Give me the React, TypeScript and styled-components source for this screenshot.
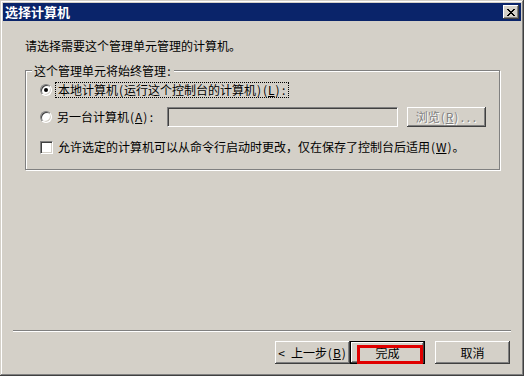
import React from "react";
import styled, { createGlobalStyle } from "styled-components";

const GlobalStyle = createGlobalStyle`
  html, body { margin: 0; padding: 0; background: #D4D0C8; }
  body { font-family: "Noto Sans CJK SC", "Noto Sans", sans-serif; font-size: 12px; color: #000; }
`;

const Window = styled.div`
  width: 524px;
  height: 376px;
  box-sizing: border-box;
  background: #d4d0c8;
  padding: 3px;
  display: flex;
  flex-direction: column;
  box-shadow: inset -1px -1px #404040, inset 1px 1px #d4d0c8,
    inset -2px -2px #808080, inset 2px 2px #ffffff;
`;

const TitleBar = styled.div`
  height: 18px;
  background: #0a246a;
  display: flex;
  align-items: center;
  justify-content: space-between;
  padding: 0 2px 0 2px;
`;

const Title = styled.span`
  color: #fff;
  font-weight: bold;
  font-size: 13px;
  line-height: 18px;
`;

const CloseButton = styled.div`
  width: 16px;
  height: 14px;
  background: #d4d0c8;
  display: flex;
  align-items: center;
  justify-content: center;
  box-shadow: inset -1px -1px #404040, inset 1px 1px #ffffff,
    inset -2px -2px #808080, inset 2px 2px #d4d0c8;
`;

const Body = styled.div`
  flex: 1;
  display: flex;
  flex-direction: column;
  padding: 17px 10px 9px 10px;
`;

const Main = styled.div`
  padding: 0 11px 0 12px;
  display: flex;
  flex-direction: column;
`;

const Intro = styled.div`
  line-height: 16px;
  height: 16px;
`;

const Group = styled.div`
  position: relative;
  margin-top: 16px;
  border: 1px solid #808080;
  box-shadow: inset 1px 1px #ffffff, 1px 1px #ffffff;
  padding: 11px 10px 14px 14px;
  display: flex;
  flex-direction: column;
`;

const Legend = styled.span`
  position: absolute;
  top: -8px;
  left: 6px;
  padding: 0 2px;
  background: #d4d0c8;
  line-height: 16px;
`;

const Row = styled.div<{ $gap?: number; $h?: number }>`
  display: flex;
  align-items: center;
  height: ${(p) => p.$h ?? 16}px;
  margin-top: ${(p) => p.$gap ?? 0}px;
`;

const Radio = styled.span<{ $checked?: boolean }>`
  position: relative;
  width: 12px;
  height: 12px;
  box-sizing: border-box;
  border-radius: 50%;
  background: #fff;
  border: 1px solid;
  border-color: #808080 #ffffff #ffffff #808080;
  box-shadow: inset 1px 1px #404040, inset -1px -1px #d4d0c8;
  margin-right: 3px;
  flex: none;
  &::after {
    content: "";
    display: ${(p) => (p.$checked ? "block" : "none")};
    position: absolute;
    left: 3px;
    top: 3px;
    width: 4px;
    height: 4px;
    border-radius: 50%;
    background: #000;
  }
`;

const Check = styled.span`
  width: 13px;
  height: 13px;
  box-sizing: border-box;
  background: #fff;
  border: 1px solid;
  border-color: #808080 #ffffff #ffffff #808080;
  box-shadow: inset 1px 1px #404040, inset -1px -1px #d4d0c8;
  margin-right: 5px;
  flex: none;
`;

const Label = styled.span<{ $w?: number }>`
  line-height: 16px;
  white-space: nowrap;
  ${(p) => (p.$w ? `width: ${p.$w}px; padding-left: 2px; box-sizing: border-box;` : "")}
`;

const FocusLabel = styled.span`
  line-height: 14px;
  border: 1px dotted #000;
  padding: 0 1px 0 2px;
  white-space: nowrap;
`;

const Caption = styled.span`
  white-space: pre;
`;

/* one half-width cell, as the bitmap font draws ASCII */
const Cell = styled.span<{ $u?: boolean }>`
  display: inline-block;
  min-width: 6px;
  text-align: center;
  text-decoration: ${(p) => (p.$u ? "underline" : "none")};
`;

/* "&X" marks the mnemonic letter */
function Txt({ s }: { s: string }) {
  const out: React.ReactNode[] = [];
  let run = "";
  let k = 0;
  const flush = () => {
    if (run) {
      out.push(run);
      run = "";
    }
  };
  for (let i = 0; i < s.length; i++) {
    const ch = s[i];
    if (ch === "&" && i + 1 < s.length) {
      flush();
      out.push(
        <Cell key={k++} $u>
          {s[i + 1]}
        </Cell>
      );
      i++;
    } else if (ch.charCodeAt(0) < 128) {
      flush();
      out.push(<Cell key={k++}>{ch === " " ? "\u00a0" : ch}</Cell>);
    } else {
      run += ch;
    }
  }
  flush();
  return <>{out}</>;
}

const TextField = styled.div`
  width: 231px;
  height: 20px;
  box-sizing: border-box;
  background: #d4d0c8;
  border: 1px solid;
  border-color: #808080 #ffffff #ffffff #808080;
  box-shadow: inset 1px 1px #404040, inset -1px -1px #d4d0c8;
  margin-right: 9px;
`;

const PushButton = styled.div<{ $w?: number; $h?: number; $disabled?: boolean; $default?: boolean }>`
  position: relative;
  width: ${(p) => p.$w ?? 75}px;
  height: ${(p) => p.$h ?? 23}px;
  box-sizing: border-box;
  display: flex;
  align-items: center;
  justify-content: center;
  background: #d4d0c8;
  line-height: 16px;
  white-space: pre;
  color: ${(p) => (p.$disabled ? "#808080" : "#000")};
  text-shadow: ${(p) => (p.$disabled ? "1px 1px #ffffff" : "none")};
  border: ${(p) => (p.$default ? "1px solid #000" : "none")};
  box-shadow: inset -1px -1px #404040, inset 1px 1px #ffffff,
    inset -2px -2px #808080, inset 2px 2px #d4d0c8;
`;

const RedMark = styled.span`
  position: absolute;
  left: 6px;
  top: 3px;
  width: 66px;
  height: 19px;
  box-sizing: border-box;
  border: 3px solid #e00000;
`;

const Spacer = styled.div`
  flex: 1;
`;

const Separator = styled.div`
  height: 1px;
  background: #808080;
  border-bottom: 1px solid #ffffff;
  margin-bottom: 9px;
`;

const ButtonRow = styled.div`
  display: flex;
  justify-content: flex-end;
  padding-right: 1px;
`;

const Gap = styled.div<{ $w: number }>`
  width: ${(p) => p.$w}px;
`;

export default function App() {
  return (
    <>
      <GlobalStyle />
      <Window>
        <TitleBar>
          <Title>选择计算机</Title>
          <CloseButton>
            <svg width="8" height="7" viewBox="0 0 8 7" shapeRendering="crispEdges">
              <path d="M0 0h2v1h-2zM6 0h2v1h-2zM1 1h2v1h-2zM5 1h2v1h-2zM2 2h4v1h-4zM3 3h2v1h-2zM2 4h4v1h-4zM1 5h2v1h-2zM5 5h2v1h-2zM0 6h2v1h-2zM6 6h2v1h-2z" fill="#000" />
            </svg>
          </CloseButton>
        </TitleBar>
        <Body>
          <Main>
            <Intro>请选择需要这个管理单元管理的计算机。</Intro>
            <Group>
              <Legend>
                <Txt s="这个管理单元将始终管理:" />
              </Legend>
              <Row>
                <Radio $checked />
                <FocusLabel>
                  <Txt s="本地计算机(运行这个控制台的计算机)(&L):" />
                </FocusLabel>
              </Row>
              <Row $gap={9} $h={20}>
                <Radio />
                <Label $w={112}>
                  <Txt s="另一台计算机(&A):" />
                </Label>
                <TextField />
                <PushButton $w={79} $h={20} $disabled>
                  <Caption>
                    <Txt s="浏览(&R)..." />
                  </Caption>
                </PushButton>
              </Row>
              <Row $gap={12}>
                <Check />
                <Label>
                  <Txt s="允许选定的计算机可以从命令行启动时更改，仅在保存了控制台后适用(&W)。" />
                </Label>
              </Row>
            </Group>
          </Main>
          <Spacer />
          <Separator />
          <ButtonRow>
            <PushButton>
              <Caption>
                <Txt s="< 上一步(&B)" />
              </Caption>
            </PushButton>
            <PushButton $default>
              <Caption>完成</Caption>
              <RedMark />
            </PushButton>
            <Gap $w={10} />
            <PushButton>
              <Caption>取消</Caption>
            </PushButton>
          </ButtonRow>
        </Body>
      </Window>
    </>
  );
}
